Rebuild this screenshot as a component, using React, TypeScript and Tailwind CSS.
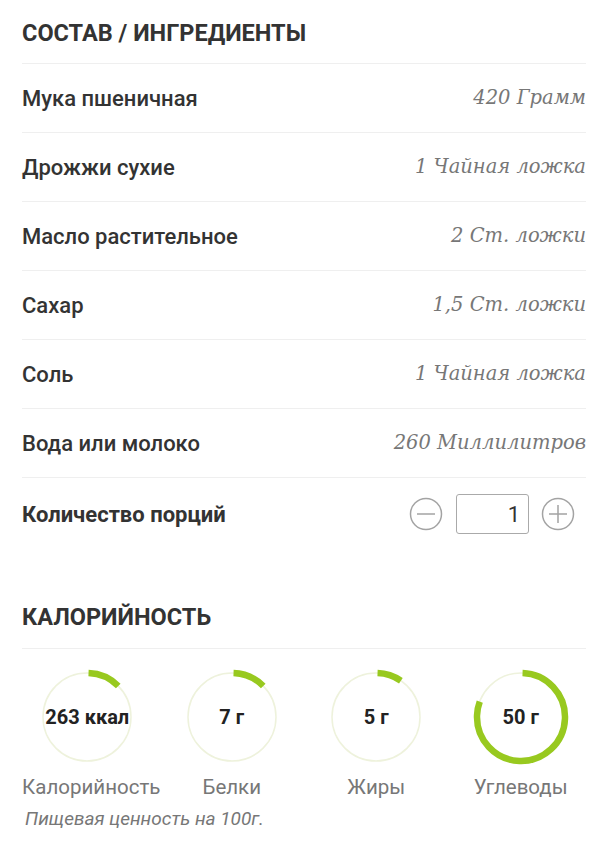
import React from 'react';

const ingredients = [
  { name: 'Мука пшеничная', amount: '420 Грамм' },
  { name: 'Дрожжи сухие', amount: '1 Чайная ложка' },
  { name: 'Масло растительное', amount: '2 Ст. ложки' },
  { name: 'Сахар', amount: '1,5 Ст. ложки' },
  { name: 'Соль', amount: '1 Чайная ложка' },
  { name: 'Вода или молоко', amount: '260 Миллилитров' },
];

const nutrition = [
  { value: '263 ккал', label: 'Калорийность', pct: 0.12 },
  { value: '7 г', label: 'Белки', pct: 0.12 },
  { value: '5 г', label: 'Жиры', pct: 0.09 },
  { value: '50 г', label: 'Углеводы', pct: 0.8 },
];

const Ring = ({ pct, value }: { pct: number; value: string }) => {
  const r = 44;
  const c = 2 * Math.PI * r;
  return (
    <div className="relative w-[96px] h-[96px]">
      <svg width="96" height="96" viewBox="0 0 96 96" className="absolute inset-0">
        <circle cx="48" cy="48" r={r} fill="none" stroke="#eef2dc" strokeWidth="1.5" />
        <circle
          cx="48"
          cy="48"
          r={r}
          fill="none"
          stroke="#98c91f"
          strokeWidth="6.5"
          strokeDasharray={`${c * pct} ${c}`}
          transform="rotate(-88 48 48)"
        />
      </svg>
      <div className="absolute inset-0 flex items-center justify-center text-[20px] font-bold text-[#222] whitespace-nowrap">
        {value}
      </div>
    </div>
  );
};

const App = () => {
  return (
    <div className="w-[600px] h-[858px] bg-white font-['Roboto',sans-serif] text-[#333]">
      <div className="pl-[22px] pr-[14px]">
        <div className="h-[64px] flex items-center pt-[4px] border-b border-[#efefef]">
          <h2 className="text-[23.5px] font-bold uppercase">Состав / Ингредиенты</h2>
        </div>
        {ingredients.map((it) => (
          <div key={it.name} className="h-[69px] flex items-center justify-between border-b border-[#efefef]">
            <span className="text-[22px] font-medium">{it.name}</span>
            <span className="text-[19.5px] italic text-[#777] font-['DejaVu_Serif',serif]">{it.amount}</span>
          </div>
        ))}
        <div className="h-[72px] flex items-center justify-between">
          <span className="text-[22px] font-bold">Количество порций</span>
          <div className="flex items-center mr-[11px]">
            <svg width="34" height="34" viewBox="0 0 34 34">
              <circle cx="17" cy="17" r="15.5" fill="none" stroke="#a3a3a3" strokeWidth="1.5" />
              <path d="M8 17h18" stroke="#a3a3a3" strokeWidth="1.5" />
            </svg>
            <div className="ml-[13px] mr-[12px] w-[73px] h-[40px] border border-[#aaa] rounded-[3px] flex items-center justify-end pr-[8px] text-[22px] text-[#333]">
              1
            </div>
            <svg width="34" height="34" viewBox="0 0 34 34">
              <circle cx="17" cy="17" r="15.5" fill="none" stroke="#a3a3a3" strokeWidth="1.5" />
              <path d="M8 17h18M17 8v18" stroke="#a3a3a3" strokeWidth="1.5" />
            </svg>
          </div>
        </div>

        <div className="mt-[36px] h-[63px] flex items-center pt-[2px] border-b border-[#efefef]">
          <h2 className="text-[23.5px] font-bold uppercase">Калорийность</h2>
        </div>
      </div>

      <div className="ml-[15px] w-[578px] mt-[20px] grid grid-cols-4">
        {nutrition.map((n, i) => (
          <div key={n.label} className="flex flex-col items-center">
            <Ring pct={n.pct} value={n.value} />
            <span className={i === 0 ? 'mt-[7px] ml-[8px] text-[20.5px] text-[#777]' : 'mt-[7px] text-[20.5px] text-[#777]'}>
              {n.label}
            </span>
          </div>
        ))}
      </div>
      <p className="mt-[2px] px-[25px] text-[19px] italic text-[#777]">Пищевая ценность на 100г.</p>
    </div>
  );
};

export default App;
